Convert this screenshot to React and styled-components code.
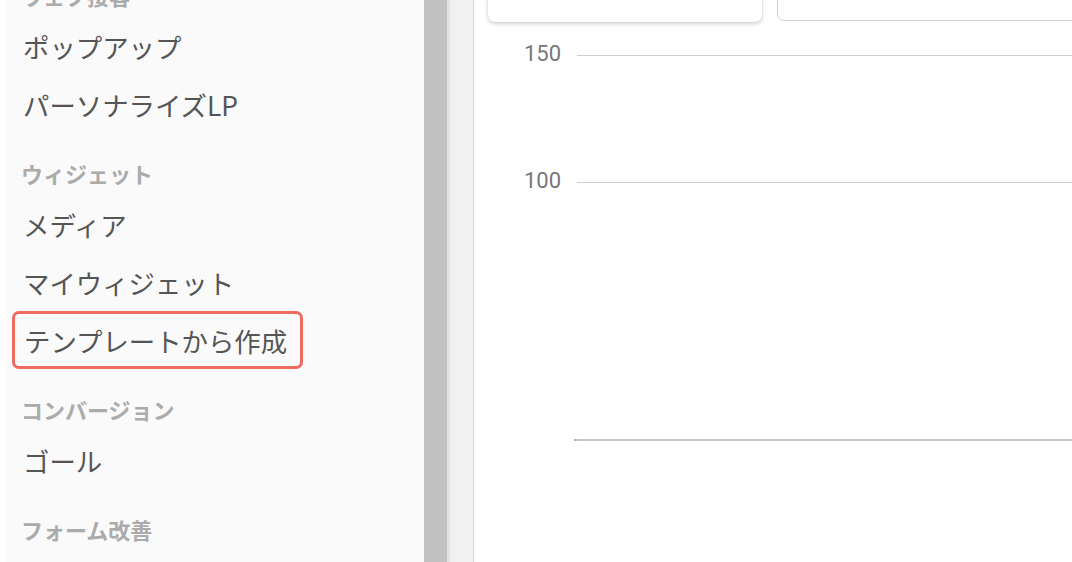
import styled, { createGlobalStyle } from 'styled-components';

const GlobalStyle = createGlobalStyle`
  html, body {
    margin: 0;
    padding: 0;
    background: #fff;
  }
  body {
    font-family: "Noto Sans CJK JP", "Noto Sans", sans-serif;
  }
`;

const menu = [
  { type: 'header', label: 'ウェブ接客' },
  { type: 'item', label: 'ポップアップ' },
  { type: 'item', label: 'パーソナライズLP' },
  { type: 'header', label: 'ウィジェット' },
  { type: 'item', label: 'メディア' },
  { type: 'item', label: 'マイウィジェット' },
  { type: 'item', label: 'テンプレートから作成', active: true },
  { type: 'header', label: 'コンバージョン' },
  { type: 'item', label: 'ゴール' },
  { type: 'header', label: 'フォーム改善' },
];

const ticks = [
  { value: 150, y: 33 },
  { value: 100, y: 160 },
];

const App = () => {
  return (
    <>
      <GlobalStyle />
      <Page>
        <Gutter />
        <Sidebar>
          <MenuList>
            {menu.map((entry) =>
              entry.type === 'header' ? (
                <SectionTitle key={entry.label}>{entry.label}</SectionTitle>
              ) : (
                <MenuItem key={entry.label} $active={entry.active}>
                  {entry.label}
                </MenuItem>
              )
            )}
          </MenuList>
        </Sidebar>
        <ScrollBar>
          <Thumb />
          <Track />
        </ScrollBar>
        <Main>
          <CardRow>
            <StatCard $raised />
            <StatCard $grow />
          </CardRow>
          <ChartSvg width="598" height="540" viewBox="0 0 598 540">
            {ticks.map((t) => (
              <g key={t.value}>
                <text
                  x="87"
                  y={t.y + 6}
                  textAnchor="end"
                  fontFamily="Roboto, 'Liberation Sans', sans-serif"
                  fontSize="22"
                  fill="#777"
                >
                  {t.value}
                </text>
                <line x1="103" y1={t.y + 0.5} x2="598" y2={t.y + 0.5} stroke="#cfcfcf" strokeWidth="1.2" />
              </g>
            ))}
            <line x1="100" y1="418" x2="598" y2="418" stroke="#c8c8c8" strokeWidth="2" />
            <line x1="100" y1="418" x2="103" y2="418" stroke="#b5b5b5" strokeWidth="2" />
          </ChartSvg>
        </Main>
      </Page>
    </>
  );
};

export default App;

const Page = styled.div`
  display: flex;
  width: 1072px;
  height: 562px;
  overflow: hidden;
  background: #fff;
`;

const Gutter = styled.div`
  width: 6px;
  flex-shrink: 0;
  background: #fff;
`;

const Sidebar = styled.aside`
  width: 418px;
  flex-shrink: 0;
  background: #fafafa;
  overflow: hidden;
`;

const MenuList = styled.nav`
  display: flex;
  flex-direction: column;
  align-items: flex-start;
  margin-top: -45px;
`;

const SectionTitle = styled.div`
  padding: 29px 0 11px 15px;
  font-size: 22px;
  line-height: 22px;
  font-weight: 700;
  color: #ababab;
  white-space: nowrap;
`;

const MenuItem = styled.div`
  height: 58px;
  box-sizing: border-box;
  display: flex;
  align-items: center;
  padding: 0 12px 0 17px;
  font-size: 26.4px;
  color: #555;
  white-space: nowrap;

  ${(p) =>
    p.$active &&
    `
    margin-left: 6px;
    padding: 0 13px 0 9px;
    border: 3px solid #ef6a60;
    border-radius: 7px;
  `}
`;

const ScrollBar = styled.div`
  display: flex;
  flex-shrink: 0;
  height: 100%;
`;

const Thumb = styled.div`
  width: 23px;
  background: #c1c1c1;
`;

const Track = styled.div`
  width: 26px;
  background: #f1f1f1;
  box-shadow: inset 3px 0 0 #e2e2e2;
  border-right: 1px solid #d9d9d9;
`;

const Main = styled.main`
  flex: 1;
  min-width: 0;
  display: flex;
  flex-direction: column;
  background: #fff;
  overflow: hidden;
`;

const CardRow = styled.div`
  display: flex;
  gap: 15px;
  margin: -40px -40px 0 14px;
  height: 62px;
`;

const StatCard = styled.div`
  flex: ${(p) => (p.$grow ? '1' : '0 0 274px')};
  background: #fff;
  border-radius: 7px;
  box-sizing: border-box;
  ${(p) =>
    p.$raised
      ? 'box-shadow: 0 2px 4px rgba(0, 0, 0, 0.18), 0 0 1px rgba(0, 0, 0, 0.2);'
      : 'border: 1px solid #cfcfcf; height: 61px;'}
`;

const ChartSvg = styled.svg`
  display: block;
  flex-shrink: 0;
`;
